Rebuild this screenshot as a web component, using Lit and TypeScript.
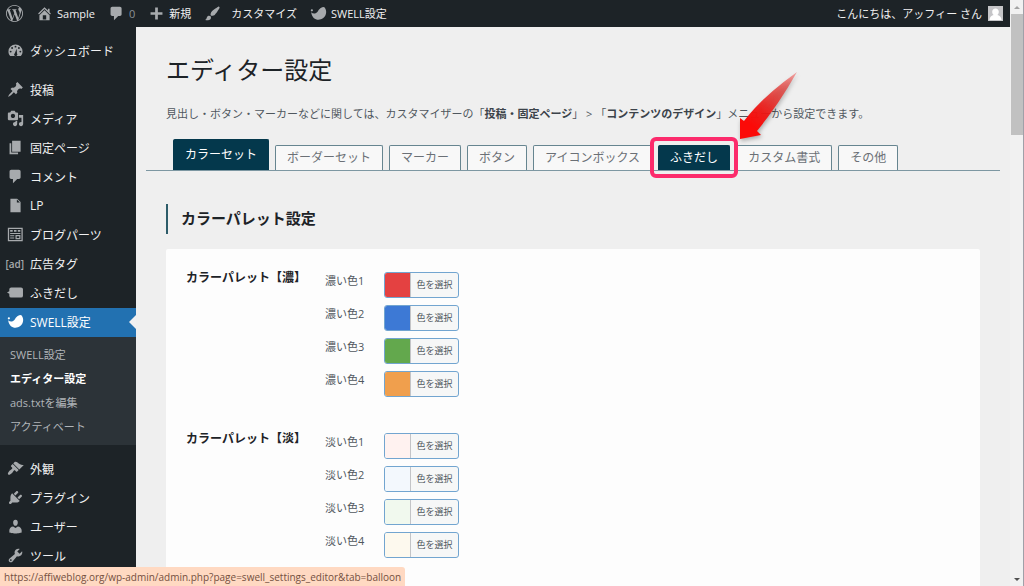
import { LitElement, html, svg, css, nothing } from "lit";
import { customElement, property } from "lit/decorators.js";
import { classMap } from "lit/directives/class-map.js";
import { styleMap } from "lit/directives/style-map.js";

const swell = svg`<circle cx="2.2" cy="6.2" r="1.3"/><path d="M1.4 8.4C3.6 10.6 7 10.4 8.9 7.8C10.6 4.4 13.4 2.3 16.6 2.3C20.4 6 19.6 12.2 15.6 15.4C10 19.4 2.4 17 1.4 8.4z"/>`;
const bubble = svg`<path d="M5 2h9c1.1 0 2 .9 2 2v7c0 1.1-.9 2-2 2h-2l-5 5v-5H5c-1.1 0-2-.9-2-2V4c0-1.1.9-2 2-2z"/>`;

const ICONS: Record<string, unknown> = {
  wordpress: svg`<path transform="scale(.8333)" d="M21.469 6.825c.84 1.537 1.318 3.3 1.318 5.175 0 3.979-2.156 7.456-5.363 9.325l3.295-9.527c.615-1.54.82-2.771.82-3.864 0-.405-.026-.78-.07-1.11m-7.981.105c.647-.03 1.232-.105 1.232-.105.582-.075.514-.93-.067-.899 0 0-1.755.135-2.88.135-1.064 0-2.85-.15-2.85-.15-.585-.03-.661.855-.075.885 0 0 .54.061 1.125.09l1.68 4.605-2.37 7.08L5.354 6.9c.649-.03 1.234-.1 1.234-.1.585-.075.516-.93-.065-.896 0 0-1.746.138-2.874.138-.2 0-.438-.008-.69-.015C4.911 3.15 8.235 1.215 12 1.215c2.809 0 5.365 1.072 7.286 2.833-.046-.003-.091-.009-.141-.009-1.06 0-1.812.923-1.812 1.914 0 .89.513 1.643 1.06 2.531.411.72.89 1.643.89 2.977 0 .915-.354 1.994-.821 3.479l-1.075 3.585-3.9-11.61.001.014zM12 22.784c-1.059 0-2.081-.153-3.048-.437l3.237-9.406 3.315 9.087c.024.053.05.101.078.149-1.12.393-2.325.609-3.582.609M1.211 12c0-1.564.336-3.05.935-4.39L7.29 21.709C3.694 19.96 1.212 16.271 1.211 12M12 0C5.385 0 0 5.385 0 12s5.385 12 12 12 12-5.385 12-12S18.615 0 12 0"/>`,
  home: svg`<path d="M16 8.5l1.53 1.53-1.06 1.06L10 4.6l-6.47 6.49-1.06-1.06L10 2.5l4 4v-2h2v4zm-6-2.46l6 5.99V18H4v-5.97zM12 17v-5H8v5h4z"/>`,
  comment: bubble,
  plus: svg`<path d="M17 8.400v3.200h-5.400V17H8.400v-5.400H3V8.400h5.400V3h3.200v5.400z"/>`,
  brush: svg`<path d="M18.33 3.57s.27-.8-.31-1.36c-.53-.52-1.22-.24-1.22-.24-.61.3-5.76 3.47-7.67 5.57-.86.96-2.06 3.79-1.09 4.82.92.98 3.96-.17 4.79-1 2.06-2.06 5.21-7.17 5.5-7.79zM1.4 17.65c2.37-1.56 1.46-3.41 3.23-4.64.93-.65 2.22-.62 3.08.29.63.67.8 2.57-.16 3.46-1.57 1.45-4 1.55-6.15.89z"/>`,
  swell,
  dashboard: svg`<path fill-rule="evenodd" d="M3.8 16.600h12.400C17.700 15 18.300 13.100 18.300 11.200a8.300 8.300 0 0 0-16.600 0c0 1.900.6 3.800 2.100 5.400zM10 4.400a1.100 1.100 0 1 1 0 2.200 1.100 1.100 0 0 1 0-2.200zM6 6a1.100 1.100 0 1 1 0 2.200A1.100 1.100 0 0 1 6 6zM14 6a1.100 1.100 0 1 1 0 2.200A1.100 1.100 0 0 1 14 6zM4.300 10.200a1.100 1.100 0 1 1 0 2.200 1.100 1.100 0 0 1 0-2.200zM15.700 10.200a1.100 1.100 0 1 1 0 2.200 1.100 1.100 0 0 1 0-2.200zM11.300 8l.5 5.500a1.900 1.900 0 1 1-2.600-.4z"/>`,
  pin: svg`<path d="M10.44 3.02l1.82-1.82 6.36 6.35-1.83 1.82c-1.05-.68-2.48-.57-3.41.36l-.75.75c-.92.93-1.04 2.35-.35 3.41l-1.83 1.82-2.41-2.41-2.8 2.79c-.42.42-3.38 2.71-3.8 2.29s1.86-3.39 2.28-3.81l2.79-2.79L4.1 9.36l1.83-1.82c1.05.69 2.48.57 3.4-.36l.75-.75c.93-.92 1.05-2.35.36-3.41z"/>`,
  media: svg`<path d="M13 11V4c0-.55-.45-1-1-1h-1.67L9 1H5L3.67 3H2c-.55 0-1 .45-1 1v7c0 .55.45 1 1 1h10c.55 0 1-.45 1-1zM7 4.5c1.38 0 2.5 1.12 2.5 2.5S8.38 9.5 7 9.5 4.5 8.38 4.5 7 5.62 4.5 7 4.5zM14 6h5v10.5c0 1.38-1.12 2.5-2.5 2.5S14 17.88 14 16.5s1.12-2.5 2.5-2.5c.17 0 .34.02.5.05V9h-3V6zm-4 8.05V13h2v3.5c0 1.38-1.12 2.5-2.5 2.5S7 17.88 7 16.5 8.12 14 9.5 14c.17 0 .34.02.5.05z"/>`,
  page: svg`<path d="M6 15V2h10v13H6zm-1 1h8v2H3V5h2v11z"/>`,
  file: svg`<path d="M12 2l4 4v12H4V2h8zm-.4 4.400h3.600l-3.600-3.600z" fill-rule="evenodd"/>`,
  parts: svg`<path fill-rule="evenodd" d="M1 2h17.500v16H1zM2.500 3.500v13H17v-13zM3.700 4.700h3v2h-3zM8.200 4.700h3v2h-3zM12.700 4.700h3v2h-3zM3.700 8.300h12.100v1.200H3.700zM3.700 11h4.800v1.200H3.700zM3.700 13.600h4.800v1.200H3.700zM10 10.600h5.800v4.900H10zM11.400 12v2.200h3V12z"/>`,
  balloon: svg`<path d="M5 4h11.500a2.300 2.300 0 0 1 2.300 2.300v7.400a2.300 2.300 0 0 1-2.300 2.300H5a2.300 2.300 0 0 1-2.300-2.300v-2.200L0 10l2.700-1.500V6.300A2.300 2.300 0 0 1 5 4z"/>`,
  appearance: svg`<path d="M14.48 11.06L7.41 3.99l1.5-1.5c.5-.56 2.3-.47 3.51.32 1.21.8 1.43 1.28 2.91 2.1 1.18.64 2.45 1.26 4.45.85zm-.71.71L6.7 4.7 4.93 6.47c-.39.39-.39 1.02 0 1.41l1.06 1.06c.39.39.39 1.03 0 1.42-.6.6-1.43 1.11-2.21 1.69-.35.26-.7.53-1.01.84C1.43 14.23.4 16.08 1.4 17.07c.99 1 2.84-.03 4.18-1.36.31-.31.58-.66.85-1.02.57-.78 1.08-1.61 1.69-2.21.39-.39 1.02-.39 1.41 0l1.06 1.06c.39.39 1.02.39 1.41 0z"/>`,
  plugin: svg`<path d="M13.11 4.36L9.87 7.6 8 5.73l3.24-3.24c.35-.34 1.05-.2 1.56.32.52.51.66 1.21.31 1.55zm-8 1.77l.91-1.12 9.01 9.01-1.19.84c-.71.71-2.63 1.16-3.82 1.16H6.14L4.9 17.26c-.59.59-1.54.59-2.12 0-.59-.58-.59-1.53 0-2.12l1.24-1.24v-3.88c0-1.13.4-3.19 1.09-3.89zm7.26 3.97l3.24-3.24c.34-.35 1.04-.21 1.55.31.52.51.66 1.21.31 1.55l-3.24 3.25z"/>`,
  user: svg`<path d="M10 9.25c-2.27 0-2.73-3.44-2.73-3.44C7 4.02 7.82 2 9.97 2c2.16 0 2.98 2.02 2.71 3.81 0 0-.41 3.44-2.68 3.44zm0 2.57L12.72 10c2.39 0 4.52 2.33 4.52 4.53v2.49s-3.65 1.13-7.24 1.13c-3.65 0-7.24-1.13-7.24-1.13v-2.49c0-2.25 1.94-4.48 4.47-4.48z"/>`,
  tool: svg`<path d="M16.68 9.77c-1.34 1.34-3.3 1.67-4.95.99l-5.41 6.52c-.99.99-2.59.99-3.58 0s-.99-2.59 0-3.57l6.52-5.42c-.68-1.65-.35-3.61.99-4.95 1.28-1.28 3.12-1.62 4.72-1.06l-2.89 2.89 2.82 2.82 2.86-2.87c.53 1.58.18 3.39-1.08 4.65zM3.81 16.21c.4.39 1.04.39 1.43 0 .4-.4.4-1.04 0-1.43-.39-.4-1.03-.4-1.43 0-.39.39-.39 1.03 0 1.43z" fill-rule="evenodd"/>`,
};

@customElement("wp-icon")
class WpIcon extends LitElement {
  static styles = css`
    :host { display: block; flex: none; width: 17px; height: 17px; color: #a7aaad; }
    svg { display: block; width: 100%; height: 100%; fill: currentColor; overflow: visible; }
  `;
  @property() name = "";
  render() {
    return html`<svg viewBox="0 0 20 20" aria-hidden="true">${ICONS[this.name]}</svg>`;
  }
}

@customElement("admin-bar")
class AdminBar extends LitElement {
  static styles = css`
    :host { display: flex; justify-content: space-between; height: 27px; background: #1d2327; font-size: 11px; line-height: 27px; }
    nav, a { display: flex; align-items: center; }
    nav { padding-left: 6px; gap: 13px; }
    a { gap: 4px; color: #f0f0f1; text-decoration: none; white-space: nowrap; }
    .count { color: #8c9196; }
    .spaced { gap: 10px; }
    .account { gap: 6px; padding-right: 7px; }
    .avatar { width: 15px; height: 15px; background: #c5c5c8; }
  `;
  render() {
    return html`
      <nav>
        <a href="#" aria-label="WordPress"><wp-icon name="wordpress"></wp-icon></a>
        <a href="#"><wp-icon name="home"></wp-icon>Sample</a>
        <a href="#"><wp-icon name="comment"></wp-icon><span class="count">0</span></a>
        <a href="#"><wp-icon name="plus"></wp-icon>新規</a>
        <a href="#" class="spaced"><wp-icon name="brush"></wp-icon>カスタマイズ</a>
        <a href="#"><wp-icon name="swell"></wp-icon>SWELL設定</a>
      </nav>
      <a href="#" class="account">こんにちは、アッフィー さん
        <svg class="avatar" viewBox="0 0 15 15" aria-hidden="true">
          <path fill="#fff" d="M7.500 2.500c2 0 3.300 1.400 3.300 3.300 0 1.500-.6 2.700-1.500 3.300 2.200.5 4 1.900 4.300 4.900H1.400c.3-3 2.100-4.400 4.300-4.900-.9-.6-1.500-1.800-1.500-3.300 0-1.900 1.300-3.300 3.300-3.300z"/>
        </svg>
      </a>
    `;
  }
}

type MenuItem = { icon: string; label: string; gap?: boolean; sub?: string[] };

const MENU: MenuItem[] = [
  { icon: "dashboard", label: "ダッシュボード", gap: true },
  { icon: "pin", label: "投稿", gap: true },
  { icon: "media", label: "メディア" },
  { icon: "page", label: "固定ページ" },
  { icon: "comment", label: "コメント" },
  { icon: "file", label: "LP" },
  { icon: "parts", label: "ブログパーツ" },
  { icon: "ad", label: "広告タグ" },
  { icon: "balloon", label: "ふきだし" },
  { icon: "swell", label: "SWELL設定", sub: ["SWELL設定", "エディター設定", "ads.txtを編集", "アクティベート"] },
  { icon: "appearance", label: "外観", gap: true },
  { icon: "plugin", label: "プラグイン" },
  { icon: "user", label: "ユーザー" },
  { icon: "tool", label: "ツール" },
];

@customElement("admin-menu")
class AdminMenu extends LitElement {
  static styles = css`
    :host { display: block; background: #1d2327; overflow: hidden; }
    ul { list-style: none; margin: 0; padding: 0; }
    a { display: block; color: inherit; text-decoration: none; white-space: nowrap; }
    .item { display: grid; grid-template-columns: 24px 1fr; column-gap: 6px; align-items: center; box-sizing: border-box; height: 29px; padding-bottom: 2px; font-size: 12px; color: #f0f0f1; position: relative; }
    .item wp-icon, .ad { justify-self: end; }
    .ad { color: #a7aaad; font-size: 10px; font-weight: 600; }
    .gap { margin-top: 10px; }
    .current { background: #2271b1; color: #fff; }
    .current wp-icon { color: #fff; }
    .current::after { content: ""; position: absolute; right: 0; top: 7px; border: solid transparent; border-width: 7px; border-left: 0; border-right-color: #f0f0f1; }
    .sub { padding: 6px 0; background: #2c3338; font-size: 11px; line-height: 24px; color: #b1b5b9; }
    .sub a { padding-left: 10px; }
    .sub .active { color: #fff; font-weight: 700; }
  `;
  render() {
    return html`<ul>
      ${MENU.map(
        (m) => html`<li class=${classMap({ gap: !!m.gap })}>
          <a href="#" class=${classMap({ item: true, current: !!m.sub })}>
            ${m.icon === "ad" ? html`<span class="ad">[ad]</span>` : html`<wp-icon name=${m.icon}></wp-icon>`}
            <span>${m.label}</span>
          </a>
          ${m.sub
            ? html`<ul class="sub">${m.sub.map((s, i) => html`<li><a href="#" class=${i === 1 ? "active" : ""}>${s}</a></li>`)}</ul>`
            : nothing}
        </li>`
      )}
    </ul>`;
  }
}

@customElement("settings-tabs")
class SettingsTabs extends LitElement {
  static styles = css`
    :host { display: block; }
    nav { display: flex; align-items: flex-end; gap: 6px; padding-left: 27px; border-bottom: 1px solid #7d97a2; }
    a { box-sizing: border-box; height: 25px; padding: 0 11px; border: 1px solid #668590; border-bottom: 0; border-radius: 2px 2px 0 0; background: #f8f8f8; color: #6b7076; font-size: 12px; line-height: 23px; text-decoration: none; white-space: nowrap; position: relative; }
    .active, .hover { background: #04384c; border-color: #04384c; color: #fff; }
    .active { height: 31px; line-height: 30px; }
    .hover { z-index: 1; }
    .ring { position: absolute; inset: -9px -9px -8px; border: 4px solid #fc2b6c; border-radius: 6px; }
    .arrow { position: absolute; left: 80px; top: -74px; width: 60px; height: 68px; filter: drop-shadow(1px 2px 2px rgba(0, 0, 0, 0.3)); }
  `;
  render() {
    const tabs = ["カラーセット", "ボーダーセット", "マーカー", "ボタン", "アイコンボックス", "ふきだし", "カスタム書式", "その他"];
    return html`<nav>
      ${tabs.map(
        (t, i) => html`<a href="#" class=${classMap({ active: i === 0, hover: i === 5 })}>${t}${i === 5
          ? html`<span class="ring"></span>
              <svg class="arrow" viewBox="0 0 60 68" aria-hidden="true">
                <defs>
                  <linearGradient id="fade" gradientUnits="userSpaceOnUse" x1="58" y1="1" x2="14" y2="54">
                    <stop offset="0" stop-color="#f5201c" stop-opacity=".35"/>
                    <stop offset=".35" stop-color="#e23a36" stop-opacity=".8"/>
                    <stop offset=".75" stop-color="#ee1613" stop-opacity=".95"/>
                    <stop offset="1" stop-color="#fb0a08"/>
                  </linearGradient>
                </defs>
                <path fill="url(#fade)" d="M1 67L1 46L5 49Q22 26 58 0Q40 32 18 59L22 63z"/>
              </svg>`
          : nothing}</a>`
      )}
    </nav>`;
  }
}

const GROUPS = [
  { title: "カラーパレット【濃】", name: "濃い色", id: "deep", colors: ["#e44141", "#3d79d5", "#63a84d", "#f09f4d"] },
  { title: "カラーパレット【淡】", name: "淡い色", id: "pale", colors: ["#fff2f0", "#f3f8fd", "#f1f9ee", "#fdf9ee"] },
];

@customElement("palette-panel")
class PalettePanel extends LitElement {
  static styles = css`
    :host { display: flex; flex-direction: column; gap: 36px; padding: 23px 20px 40px; background: #fdfdfd; border-radius: 2px; }
    section { display: grid; grid-template-columns: 139px 1fr; }
    h3 { margin: 0; font-size: 12px; line-height: 12px; color: #1d2327; white-space: nowrap; }
    .rows { display: grid; gap: 7px; }
    .row { display: grid; grid-template-columns: 59px auto; justify-content: start; }
    label { font-size: 11px; line-height: 17px; color: #50575e; white-space: nowrap; }
    button { display: grid; grid-template-columns: 26px 1fr; align-items: stretch; box-sizing: border-box; width: 75px; height: 26px; padding: 0; border: 1px solid #72a5d0; border-radius: 3px; background: #f6f7f7; color: #50575e; font-family: inherit; font-size: 9px; line-height: 24px; white-space: nowrap; overflow: hidden; }
    .swatch { border-right: 1px solid #c3c4c7; }
  `;
  render() {
    return html`${GROUPS.map(
      (g) => html`<section>
        <h3>${g.title}</h3>
        <div class="rows">
          ${g.colors.map(
            (c, i) => html`<div class="row">
              <label for=${g.id + i}>${g.name}${i + 1}</label>
              <button id=${g.id + i} type="button"><span class="swatch" style=${styleMap({ backgroundColor: c })}></span><span>色を選択</span></button>
            </div>`
          )}
        </div>
      </section>`
    )}`;
  }
}

@customElement("app-root")
class AppRoot extends LitElement {
  static styles = css`
    :host { display: grid; grid-template-columns: 1fr 14px; height: 100vh; overflow: hidden; background: #f0f0f1; color: #50575e; font-family: "Open Sans", "Noto Sans CJK JP", sans-serif; font-size: 11px; }
    .page { display: grid; grid-template: 27px minmax(0, 1fr) / 136px minmax(0, 1fr); min-height: 0; }
    admin-bar { grid-column: 1 / -1; }
    main { min-width: 0; overflow: hidden; background: #efefef; padding: 26px 10px 0; }
    .inset { padding: 0 20px; }
    h1 { margin: 0; font-size: 24px; line-height: 34px; font-weight: 400; color: #1d2327; }
    p { margin: 19px 0 17px; line-height: 16px; white-space: nowrap; }
    b { color: #3c434a; }
    h2 { margin: 33px 0 15px; padding: 0 0 2px 13px; border-left: 2px solid #2d5c69; font-size: 15px; line-height: 28px; font-weight: 700; color: #1d2327; }
    .scrollbar { display: flex; flex-direction: column; align-items: center; background: #f1f1f1; border-right: 1px solid #a0a0a8; }
    .thumb { align-self: stretch; height: 121px; margin-left: 1px; background: #c1c1c1; }
    .up, .down { width: 6px; height: 3px; fill: #a3a3a3; padding: 6px 0 5px; }
    .down { margin-top: auto; fill: #505050; }
    .status { position: fixed; left: 0; bottom: 0; box-sizing: border-box; height: 19px; padding: 0 4px; border-radius: 0 3px 0 0; background: #ffd9c2; color: #74503f; font-size: 10px; line-height: 20px; white-space: nowrap; }
  `;
  render() {
    return html`
      <div class="page" lang="ja">
        <admin-bar></admin-bar>
        <admin-menu></admin-menu>
        <main>
          <div class="inset">
            <h1>エディター設定</h1>
            <p>見出し・ボタン・マーカーなどに関しては、カスタマイザーの「<b>投稿・固定ページ</b>」 &gt; 「<b>コンテンツのデザイン</b>」メニューから設定できます。</p>
          </div>
          <settings-tabs></settings-tabs>
          <div class="inset">
            <h2>カラーパレット設定</h2>
            <palette-panel></palette-panel>
          </div>
        </main>
      </div>
      <div class="scrollbar" aria-hidden="true">
        <svg class="up" viewBox="0 0 6 3"><path d="M0 3L3 0L6 3z"/></svg>
        <div class="thumb"></div>
        <svg class="down" viewBox="0 0 6 3"><path d="M0 0H6L3 3z"/></svg>
      </div>
      <div class="status">https://affiweblog.org/wp-admin/admin.php?page=swell_settings_editor&amp;tab=balloon</div>
    `;
  }
}
